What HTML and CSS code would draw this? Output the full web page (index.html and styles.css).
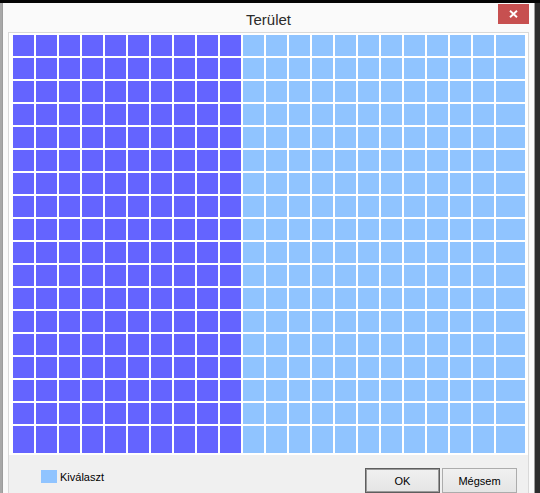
FILE: index.html
```html
<!DOCTYPE html>
<html lang="hu">
<head>
<meta charset="utf-8">
<title>Terület</title>
<link rel="stylesheet" href="styles.css">
</head>
<body>
<div class="window">
  <div class="titlebar">
    <div class="title">Terület</div>
    <div class="close"><svg width="9" height="8" viewBox="0 0 9 8"><path d="M1 0.8 L8 7.2 M8 0.8 L1 7.2" stroke="#fff" stroke-width="1.9" fill="none"/></svg></div>
  </div>
  <div class="client">
    <div class="panel">
      <div class="grid">
<i class="d"></i><i class="d"></i><i class="d"></i><i class="d"></i><i class="d"></i><i class="d"></i><i class="d"></i><i class="d"></i><i class="d"></i><i class="d"></i><i class="l"></i><i class="l"></i><i class="l"></i><i class="l"></i><i class="l"></i><i class="l"></i><i class="l"></i><i class="l"></i><i class="l"></i><i class="l"></i><i class="l"></i><i class="l"></i>
<i class="d"></i><i class="d"></i><i class="d"></i><i class="d"></i><i class="d"></i><i class="d"></i><i class="d"></i><i class="d"></i><i class="d"></i><i class="d"></i><i class="l"></i><i class="l"></i><i class="l"></i><i class="l"></i><i class="l"></i><i class="l"></i><i class="l"></i><i class="l"></i><i class="l"></i><i class="l"></i><i class="l"></i><i class="l"></i>
<i class="d"></i><i class="d"></i><i class="d"></i><i class="d"></i><i class="d"></i><i class="d"></i><i class="d"></i><i class="d"></i><i class="d"></i><i class="d"></i><i class="l"></i><i class="l"></i><i class="l"></i><i class="l"></i><i class="l"></i><i class="l"></i><i class="l"></i><i class="l"></i><i class="l"></i><i class="l"></i><i class="l"></i><i class="l"></i>
<i class="d"></i><i class="d"></i><i class="d"></i><i class="d"></i><i class="d"></i><i class="d"></i><i class="d"></i><i class="d"></i><i class="d"></i><i class="d"></i><i class="l"></i><i class="l"></i><i class="l"></i><i class="l"></i><i class="l"></i><i class="l"></i><i class="l"></i><i class="l"></i><i class="l"></i><i class="l"></i><i class="l"></i><i class="l"></i>
<i class="d"></i><i class="d"></i><i class="d"></i><i class="d"></i><i class="d"></i><i class="d"></i><i class="d"></i><i class="d"></i><i class="d"></i><i class="d"></i><i class="l"></i><i class="l"></i><i class="l"></i><i class="l"></i><i class="l"></i><i class="l"></i><i class="l"></i><i class="l"></i><i class="l"></i><i class="l"></i><i class="l"></i><i class="l"></i>
<i class="d"></i><i class="d"></i><i class="d"></i><i class="d"></i><i class="d"></i><i class="d"></i><i class="d"></i><i class="d"></i><i class="d"></i><i class="d"></i><i class="l"></i><i class="l"></i><i class="l"></i><i class="l"></i><i class="l"></i><i class="l"></i><i class="l"></i><i class="l"></i><i class="l"></i><i class="l"></i><i class="l"></i><i class="l"></i>
<i class="d"></i><i class="d"></i><i class="d"></i><i class="d"></i><i class="d"></i><i class="d"></i><i class="d"></i><i class="d"></i><i class="d"></i><i class="d"></i><i class="l"></i><i class="l"></i><i class="l"></i><i class="l"></i><i class="l"></i><i class="l"></i><i class="l"></i><i class="l"></i><i class="l"></i><i class="l"></i><i class="l"></i><i class="l"></i>
<i class="d"></i><i class="d"></i><i class="d"></i><i class="d"></i><i class="d"></i><i class="d"></i><i class="d"></i><i class="d"></i><i class="d"></i><i class="d"></i><i class="l"></i><i class="l"></i><i class="l"></i><i class="l"></i><i class="l"></i><i class="l"></i><i class="l"></i><i class="l"></i><i class="l"></i><i class="l"></i><i class="l"></i><i class="l"></i>
<i class="d"></i><i class="d"></i><i class="d"></i><i class="d"></i><i class="d"></i><i class="d"></i><i class="d"></i><i class="d"></i><i class="d"></i><i class="d"></i><i class="l"></i><i class="l"></i><i class="l"></i><i class="l"></i><i class="l"></i><i class="l"></i><i class="l"></i><i class="l"></i><i class="l"></i><i class="l"></i><i class="l"></i><i class="l"></i>
<i class="d"></i><i class="d"></i><i class="d"></i><i class="d"></i><i class="d"></i><i class="d"></i><i class="d"></i><i class="d"></i><i class="d"></i><i class="d"></i><i class="l"></i><i class="l"></i><i class="l"></i><i class="l"></i><i class="l"></i><i class="l"></i><i class="l"></i><i class="l"></i><i class="l"></i><i class="l"></i><i class="l"></i><i class="l"></i>
<i class="d"></i><i class="d"></i><i class="d"></i><i class="d"></i><i class="d"></i><i class="d"></i><i class="d"></i><i class="d"></i><i class="d"></i><i class="d"></i><i class="l"></i><i class="l"></i><i class="l"></i><i class="l"></i><i class="l"></i><i class="l"></i><i class="l"></i><i class="l"></i><i class="l"></i><i class="l"></i><i class="l"></i><i class="l"></i>
<i class="d"></i><i class="d"></i><i class="d"></i><i class="d"></i><i class="d"></i><i class="d"></i><i class="d"></i><i class="d"></i><i class="d"></i><i class="d"></i><i class="l"></i><i class="l"></i><i class="l"></i><i class="l"></i><i class="l"></i><i class="l"></i><i class="l"></i><i class="l"></i><i class="l"></i><i class="l"></i><i class="l"></i><i class="l"></i>
<i class="d"></i><i class="d"></i><i class="d"></i><i class="d"></i><i class="d"></i><i class="d"></i><i class="d"></i><i class="d"></i><i class="d"></i><i class="d"></i><i class="l"></i><i class="l"></i><i class="l"></i><i class="l"></i><i class="l"></i><i class="l"></i><i class="l"></i><i class="l"></i><i class="l"></i><i class="l"></i><i class="l"></i><i class="l"></i>
<i class="d"></i><i class="d"></i><i class="d"></i><i class="d"></i><i class="d"></i><i class="d"></i><i class="d"></i><i class="d"></i><i class="d"></i><i class="d"></i><i class="l"></i><i class="l"></i><i class="l"></i><i class="l"></i><i class="l"></i><i class="l"></i><i class="l"></i><i class="l"></i><i class="l"></i><i class="l"></i><i class="l"></i><i class="l"></i>
<i class="d"></i><i class="d"></i><i class="d"></i><i class="d"></i><i class="d"></i><i class="d"></i><i class="d"></i><i class="d"></i><i class="d"></i><i class="d"></i><i class="l"></i><i class="l"></i><i class="l"></i><i class="l"></i><i class="l"></i><i class="l"></i><i class="l"></i><i class="l"></i><i class="l"></i><i class="l"></i><i class="l"></i><i class="l"></i>
<i class="d"></i><i class="d"></i><i class="d"></i><i class="d"></i><i class="d"></i><i class="d"></i><i class="d"></i><i class="d"></i><i class="d"></i><i class="d"></i><i class="l"></i><i class="l"></i><i class="l"></i><i class="l"></i><i class="l"></i><i class="l"></i><i class="l"></i><i class="l"></i><i class="l"></i><i class="l"></i><i class="l"></i><i class="l"></i>
<i class="d"></i><i class="d"></i><i class="d"></i><i class="d"></i><i class="d"></i><i class="d"></i><i class="d"></i><i class="d"></i><i class="d"></i><i class="d"></i><i class="l"></i><i class="l"></i><i class="l"></i><i class="l"></i><i class="l"></i><i class="l"></i><i class="l"></i><i class="l"></i><i class="l"></i><i class="l"></i><i class="l"></i><i class="l"></i>
<i class="d"></i><i class="d"></i><i class="d"></i><i class="d"></i><i class="d"></i><i class="d"></i><i class="d"></i><i class="d"></i><i class="d"></i><i class="d"></i><i class="l"></i><i class="l"></i><i class="l"></i><i class="l"></i><i class="l"></i><i class="l"></i><i class="l"></i><i class="l"></i><i class="l"></i><i class="l"></i><i class="l"></i><i class="l"></i>
      </div>
    </div>
    <div class="footer">
      <div class="legend"><span class="swatch"></span><span class="legend-label">Kiválaszt</span></div>
      <div class="buttons">
        <button class="btn btn-default" type="button">OK</button>
        <button class="btn" type="button">Mégsem</button>
      </div>
    </div>
  </div>
</div>
</body>
</html>
```

FILE: styles.css
```css
html, body {
  margin: 0;
  height: 493px;
  overflow: hidden;
}
body {
  box-sizing: border-box;
  padding: 3px 0 0 2px;
  background:
    linear-gradient(#050505 0 3px, transparent 3px),
    linear-gradient(to right, #a8a8a8 0 2px, #2c2c2c 2px);
  font-family: "Liberation Sans", Arial, sans-serif;
}
.window {
  width: 533px;
  height: 490px;
  box-sizing: border-box;
  border-left: 1px solid #9c9c9c;
  border-right: 1px solid #9c9c9c;
  background: #fafafa;
  display: flex;
  flex-direction: column;
}
.titlebar {
  height: 29px;
  display: grid;
  grid-template-columns: 1fr auto 1fr;
  align-items: start;
}
.title {
  grid-column: 2;
  padding-top: 8px;
  font-size: 15px;
  line-height: 17px;
  color: #2b2b2b;
}
.close {
  grid-column: 3;
  justify-self: end;
  margin: 1px 5px 0 0;
  width: 31px;
  height: 20px;
  background: #c75050;
  display: flex;
  align-items: center;
  justify-content: center;
}
.close svg {
  display: block;
}
.client {
  flex: 1;
  margin: 0 5px;
  border: 1px solid #d9d9d9;
  border-bottom: none;
  background: #f0f0f0;
}
.panel {
  background: #ffffff;
  padding: 2px 3px 2px 4px;
}
.grid {
  display: grid;
  grid-template-columns: repeat(21, 21px) 1fr;
  grid-template-rows: repeat(17, 21px) 1fr;
  gap: 2px;
  height: 418px;
}
.grid .d {
  background: #6464ff;
}
.grid .l {
  background: #90c4ff;
}
.footer {
  display: flex;
  justify-content: space-between;
  align-items: flex-start;
  padding: 13px 11px 0 32px;
}
.legend {
  display: flex;
  align-items: center;
  gap: 3px;
  margin-top: 2px;
  font-size: 11px;
  color: #000;
}
.swatch {
  width: 16px;
  height: 13px;
  background: #90c4ff;
}
.buttons {
  display: flex;
  gap: 2px;
}
.btn {
  width: 75px;
  height: 25px;
  box-sizing: border-box;
  margin: 0;
  padding: 0;
  border: 1px solid #acacac;
  background: linear-gradient(#f0f0f0, #e5e5e5);
  font-family: "Liberation Sans", Arial, sans-serif;
  font-size: 11px;
  color: #000;
}
.btn-default {
  border-color: #5e5e5e;
  box-shadow: inset 0 0 0 1px #9a9a9a;
}
```
